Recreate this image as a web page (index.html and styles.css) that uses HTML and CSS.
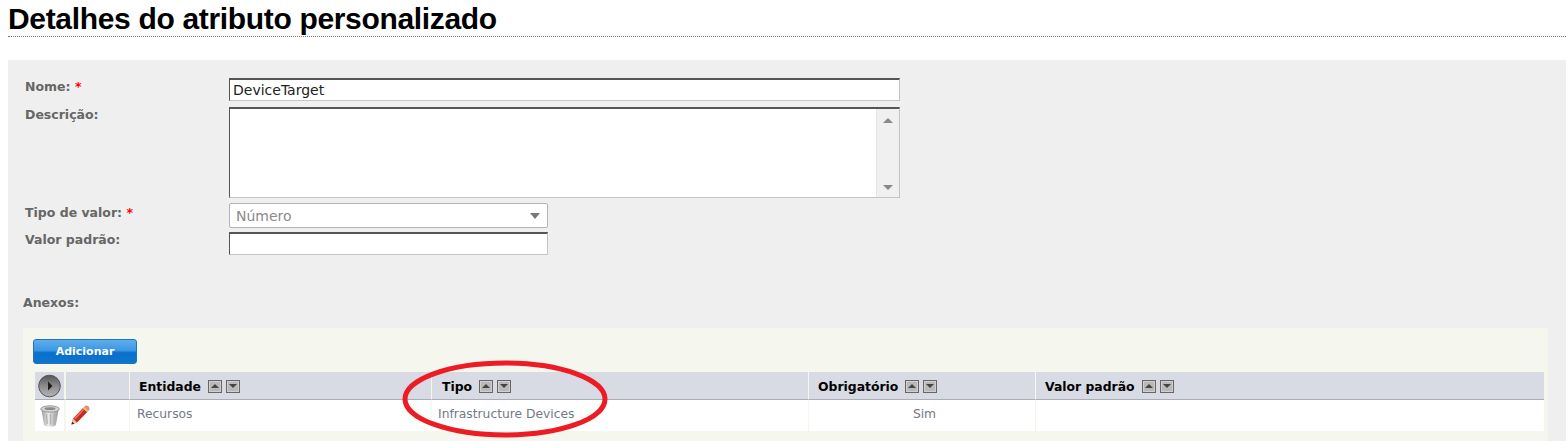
FILE: index.html
```html
<!DOCTYPE html>
<html lang="pt">
<head>
    <meta charset="UTF-8">
    <title>Detalhes do atributo personalizado</title>
    <link rel="stylesheet" href="styles.css">
</head>
<body>
    <h1 class="page-title">Detalhes do atributo personalizado</h1>

    <div class="details">
        <div class="form-grid">
            <label class="field-label label-name">Nome: <span class="req">*</span></label>
            <input class="field field-wide" type="text" value="DeviceTarget">

            <label class="field-label label-desc">Descrição:</label>
            <div class="field field-wide text-area">
                <div class="scrollbar">
                    <span class="arrow-up"></span>
                    <span class="arrow-down"></span>
                </div>
            </div>

            <label class="field-label label-type">Tipo de valor: <span class="req">*</span></label>
            <div class="select-box">
                <span>Número</span>
                <span class="select-arrow"></span>
            </div>

            <label class="field-label label-default">Valor padrão:</label>
            <input class="field field-narrow" type="text">
        </div>

        <div class="attach-title">Anexos:</div>

        <div class="attach-panel">
            <button class="add-btn">Adicionar</button>
            <table class="attach-table">
                <colgroup>
                    <col class="col-a"><col class="col-b"><col class="col-c"><col class="col-d"><col class="col-e"><col>
                </colgroup>
                <thead>
                    <tr>
                        <th class="icon-cell">
                            <svg width="23" height="24" viewBox="0 0 23 24">
                                <defs>
                                    <linearGradient id="disc" x1="0" y1="0" x2="0" y2="1">
                                        <stop offset="0" stop-color="#555"/>
                                        <stop offset="0.5" stop-color="#8c8c8c"/>
                                        <stop offset="1" stop-color="#b5b5b5"/>
                                    </linearGradient>
                                </defs>
                                <circle cx="11.500" cy="12" r="10.800" fill="url(#disc)" stroke="#555"/>
                                <path d="M10 7.500l4.500 4.500-4.500 4.500z" fill="#1e1e1e"/>
                            </svg>
                        </th>
                        <th></th>
                        <th><span class="th-in"><span class="th-text">Entidade</span><span class="sort up"></span><span class="sort down"></span></span></th>
                        <th class="th-type"><span class="th-in"><span class="th-text">Tipo</span><span class="sort up"></span><span class="sort down"></span></span></th>
                        <th><span class="th-in"><span class="th-text">Obrigatório</span><span class="sort up"></span><span class="sort down"></span></span></th>
                        <th><span class="th-in"><span class="th-text">Valor padrão</span><span class="sort up"></span><span class="sort down"></span></span></th>
                    </tr>
                </thead>
                <tbody>
                    <tr>
                        <td class="icon-cell">
                            <svg width="20" height="22" viewBox="0 0 20 22">
                                <defs>
                                    <linearGradient id="can" x1="0" y1="0" x2="1" y2="0">
                                        <stop offset="0" stop-color="#999"/>
                                        <stop offset="0.4" stop-color="#eee"/>
                                        <stop offset="1" stop-color="#969696"/>
                                    </linearGradient>
                                </defs>
                                <path d="M1.500 5l2.500 14.500q.3 2 6 2t6-2l2.500-14.500z" fill="url(#can)"/>
                                <path d="M6.500 9l.7 10M10.500 9v10.500M14.500 9l-.7 10" stroke="#b0b0b0" stroke-width="1.300" fill="none"/>
                                <ellipse cx="10" cy="4" rx="9.300" ry="3.200" fill="#d4d4d4" stroke="#9a9a9a"/>
                                <ellipse cx="10" cy="3.700" rx="5.500" ry="1.400" fill="#8a8a8a"/>
                            </svg>
                        </td>
                        <td class="edit-cell">
                            <svg width="19" height="20" viewBox="0 0 19 20">
                                <path d="M.5 19.500l1.600-6L12.500 2.500l4 4.200L6 17.500z" fill="#c8281e"/>
                                <path d="M3 13L13.500 2.500l1 1L4.500 14.500z" fill="#ea6a5c"/>
                                <path d="M13 2l1.500-1.500q1.500-.5 3 1t1 3L17 6.300z" fill="#e8867c"/>
                                <path d="M12.300 2.700l4.500 4.300" stroke="#c9d84c" stroke-width="1.500"/>
                                <path d="M.5 19.500l1.600-6 3.900 4z" fill="#e6c79a"/>
                                <path d="M.5 19.500l.7-2.800 2.100 2.100z" fill="#2d2320"/>
                            </svg>
                        </td>
                        <td class="text-cell">Recursos</td>
                        <td class="text-cell type-cell">Infrastructure Devices</td>
                        <td class="text-cell centered">Sim</td>
                        <td></td>
                    </tr>
                </tbody>
            </table>
        </div>
    </div>

    <svg class="red-circle" width="212" height="84" viewBox="0 0 212 84">
        <ellipse cx="106" cy="42" rx="100" ry="36" fill="none" stroke="#ed1c24" stroke-width="5"/>
    </svg>
</body>
</html>
```

FILE: styles.css
```css
body {
    margin: 0;
    height: 441px;
    overflow: hidden;
    position: relative;
    background: #fff;
    font-family: "DejaVu Sans", Verdana, sans-serif;
    color: #6b6b6b;
}

.page-title {
    margin: 0 0 23px 8px;
    height: 36px;
    border-bottom: 1px dotted #777;
    font-family: "Liberation Sans", Arial, sans-serif;
    font-size: 30px;
    line-height: 38px;
    font-weight: bold;
    letter-spacing: -0.33px;
    color: #000;
}

.details {
    margin-left: 8px;
    height: 381px;
    padding: 18px 18px 0 15px;
    box-sizing: border-box;
    background: #efefef;
}

.form-grid {
    display: grid;
    grid-template-columns: 204px 1fr;
    margin-left: 2px;
    row-gap: 5px;
}

.field-label {
    font-size: 12.500px;
    font-weight: bold;
    line-height: 15px;
    color: #666;
}

.label-name,
.label-desc {
    padding-top: 1px;
}

.label-type {
    padding-top: 2px;
}

.label-default {
    margin-top: -1px;
}

.req {
    color: #f00;
}

.field {
    box-sizing: border-box;
    margin: 0;
    border: 1px solid #c4c4c4;
    border-top: 2px solid #555;
    border-left: 1px solid #555;
    background: #fff;
    font-family: "DejaVu Sans", Verdana, sans-serif;
    font-size: 14px;
    color: #222;
    padding: 0 3px;
    outline: 0;
}

.field-wide {
    width: 671px;
    height: 23px;
}

.field-narrow {
    width: 319px;
    height: 23px;
    margin-top: -1px;
}

.text-area {
    height: 91px;
    margin-top: 1px;
    display: flex;
    justify-content: flex-end;
    padding: 0;
}

.scrollbar {
    width: 22px;
    background: #f0f0f0;
    border-left: 1px solid #e4e4e4;
    display: flex;
    flex-direction: column;
    justify-content: space-between;
    align-items: center;
    padding: 9px 0 7px;
}

.arrow-up {
    border: 5px solid transparent;
    border-top: 0;
    border-bottom: 5px solid #888;
}

.arrow-down {
    border: 5px solid transparent;
    border-bottom: 0;
    border-top: 5px solid #888;
}

.select-box {
    box-sizing: border-box;
    width: 319px;
    height: 25px;
    border: 1px solid #b5b5b5;
    border-radius: 2px;
    background: #fff;
    display: flex;
    align-items: center;
    justify-content: space-between;
    padding: 0 7px 0 6px;
    font-size: 14px;
    color: #8a8a8a;
}

.select-arrow {
    border: 5px solid transparent;
    border-bottom: 0;
    border-top: 6px solid #777;
}

.attach-title {
    margin-top: 40px;
    font-size: 12.500px;
    font-weight: bold;
    line-height: 15px;
    color: #666;
}

.attach-panel {
    margin-top: 18px;
    height: 113px;
    padding: 11px 4px 0 10px;
    box-sizing: border-box;
    background: #f5f6ee;
}

.add-btn {
    display: block;
    width: 104px;
    height: 25px;
    padding: 0;
    border: 1px solid #1f73bd;
    border-radius: 3px;
    background: linear-gradient(#5eaeec 0%, #3d97e4 45%, #0a70cf 55%, #0f74c9 100%);
    color: #fff;
    font-family: "DejaVu Sans", Verdana, sans-serif;
    font-size: 11px;
    font-weight: bold;
}

.attach-table {
    margin: 8px 0 0 2px;
    width: 1509px;
    table-layout: fixed;
    border-collapse: separate;
    border-spacing: 0;
}

.col-a { width: 31px; }
.col-b { width: 64px; }
.col-c { width: 302px; }
.col-d { width: 377px; }
.col-e { width: 227px; }

.attach-table th {
    box-sizing: border-box;
    height: 28px;
    padding: 1px 0 0 9px;
    background: #d8dbe3;
    border-right: 1px solid #f5f6ee;
    border-bottom: 1px solid #a9adb6;
    text-align: left;
    font-size: 12.400px;
    color: #000;
}

.attach-table .th-type {
    padding-left: 10px;
}

.attach-table td {
    box-sizing: border-box;
    height: 31px;
    padding: 0 0 0 7px;
    background: #fff;
    border-right: 1px solid #f5f6ee;
    font-size: 12.300px;
    color: #747a85;
}

.attach-table .text-cell {
    padding-bottom: 3px;
}

.attach-table .type-cell {
    padding-left: 6px;
}

.attach-table th:last-child,
.attach-table td:last-child {
    border-right: 0;
}

.attach-table .icon-cell {
    padding: 0;
    text-align: center;
    border-right: 2px solid #f5f6ee;
}

.attach-table .edit-cell {
    padding: 0 0 2px 5px;
}

.icon-cell svg,
.edit-cell svg {
    display: block;
    margin: 0 auto;
}

.edit-cell svg {
    margin: 0;
}

.attach-table .centered {
    text-align: center;
    padding-left: 5px;
}

.th-in {
    display: flex;
    align-items: center;
}

.th-text {
    margin-right: 7px;
}

.sort {
    box-sizing: border-box;
    width: 14px;
    height: 13px;
    margin-right: 4px;
    border: 1px solid #666;
    background: #b9b9b9;
    box-shadow: inset 0 0 0 1px #d0d0d0;
    display: flex;
    align-items: center;
    justify-content: center;
}

.sort::after {
    content: "";
    border: 4px solid transparent;
}

.sort.up::after {
    border-top: 0;
    border-bottom: 4px solid #444;
}

.sort.down::after {
    border-bottom: 0;
    border-top: 4px solid #444;
}

.red-circle {
    position: absolute;
    left: 399px;
    top: 357px;
}
```
